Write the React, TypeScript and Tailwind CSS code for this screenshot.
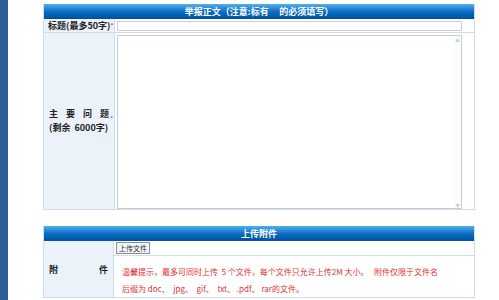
const font = "font-['SimSun','Noto_Sans_CJK_SC',serif]";

function Header({ children }: { children: React.ReactNode }) {
  return (
    <div className="flex h-[15px] items-center justify-center bg-gradient-to-b from-[#4fb0ee] via-[#0a6fc6] to-[#004fa2] text-[9px] font-bold leading-none text-white">
      {children}
    </div>
  );
}

export default function App() {
  return (
    <div className={`flex h-[300px] w-[499px] overflow-hidden bg-white ${font}`}>
      {/* left strip */}
      <div className="w-[8px] shrink-0 bg-[#2f5f98]" />

      <div className="flex flex-col pl-[35px] pt-[4px]">
        {/* 举报正文 */}
        <div className="w-[432px] border-x border-b border-[#cddcec]">
          <Header>
            举报正文（注意:标有
            <span className="mx-[4px] text-[5px] text-[#c0392b]">*</span>
            的必须填写）
          </Header>

          <div className="flex h-[14px] border-b border-[#cddcec]">
            <div className="flex w-[71px] items-center whitespace-nowrap border-r border-[#cddcec] bg-[#ebf2f9] pl-[4px] text-[9px] font-bold leading-none text-[#222]">
              标题(最多50字)<span className="text-[6px] text-[#e33]">*</span>
            </div>
            <div className="flex flex-1 items-center pl-[2px]">
              <div className="h-[10px] w-[345px] border border-[#c5ced8] bg-white" />
            </div>
          </div>

          <div className="flex h-[176px]">
            <div className="flex w-[71px] flex-col justify-center border-r border-[#cddcec] bg-[#ebf2f9] pl-[5px] text-[9px] font-bold leading-[14px] text-[#222]">
              <div className="flex w-[60px] justify-between">
                <span>主</span>
                <span>要</span>
                <span>问</span>
                <span className="relative">
                  题
                  <span className="absolute -right-[4px] top-[4px] text-[5px] text-[#e33]">*</span>
                </span>
              </div>
              <div className="whitespace-pre">(剩余  6000字)</div>
            </div>
            <div className="flex flex-1 pl-[2px] pt-[2px]">
              <div className="flex h-[174px] w-[345px] border border-[#c5ced8] bg-white">
                <div className="flex-1" />
                <div className="flex w-[7px] flex-col justify-between bg-[#fbfcfd] text-[5px] leading-[7px] text-[#c8ced6]">
                  <span className="text-center">▲</span>
                  <span className="text-center">▼</span>
                </div>
              </div>
            </div>
          </div>
        </div>

        {/* 上传附件 */}
        <div className="mt-[16px] w-[432px] border-x border-b border-[#cddcec]">
          <Header>上传附件</Header>
          <div className="flex h-[56px]">
            <div className="flex w-[70px] items-center justify-between border-r border-[#cddcec] bg-[#ebf2f9] px-[5px] pt-[1px] text-[9px] font-bold text-[#222]">
              <span>附</span>
              <span>件</span>
            </div>
            <div className="flex flex-1 flex-col">
              <div className="flex h-[15px] items-start border-b border-[#cddcec] pl-[2px] pt-[1px]">
                <div className="flex h-[12px] items-center border border-[#8a8f96] bg-[#f3f3f3] px-[2px] text-[7px] leading-none text-[#333]">
                  上传文件
                </div>
              </div>
              <div className="whitespace-pre pl-[8px] pt-[7px] text-[8px] leading-[17px] text-[#e3302f]">
                <div>温馨提示，最多可同时上传  5 个文件，每个文件只允许上传2M 大小。   附件仅限于文件名</div>
                <div>后缀为 doc、  jpg、  gif、  txt、 .pdf、 rar的文件。</div>
              </div>
            </div>
          </div>
        </div>
      </div>
    </div>
  );
}
